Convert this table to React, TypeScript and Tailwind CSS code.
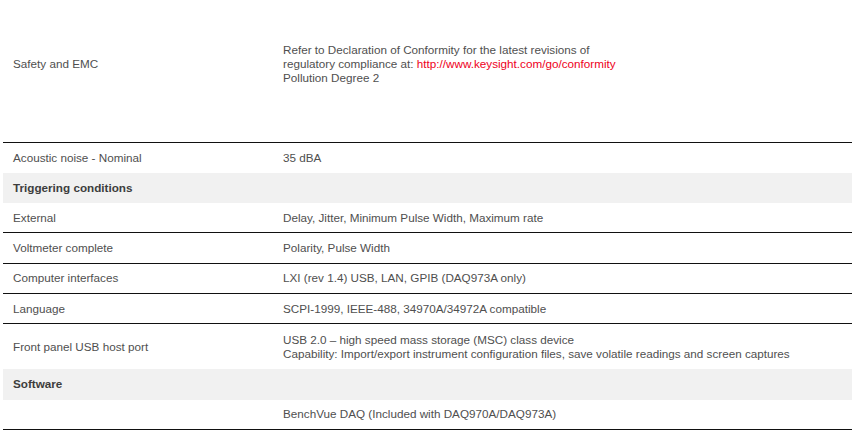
import React from "react";

type Row =
  | { kind: "head"; label: string; h: string }
  | { kind: "row"; label: string; value: React.ReactNode; h: string; border: boolean };

const rows: Row[] = [
  { kind: "row", label: "Acoustic noise - Nominal", value: "35 dBA", h: "h-[30.3px]", border: false },
  { kind: "head", label: "Triggering conditions", h: "h-[30.3px]" },
  { kind: "row", label: "External", value: "Delay, Jitter, Minimum Pulse Width, Maximum rate", h: "h-[30.3px]", border: true },
  { kind: "row", label: "Voltmeter complete", value: "Polarity, Pulse Width", h: "h-[30.3px]", border: true },
  { kind: "row", label: "Computer interfaces", value: "LXI (rev 1.4) USB, LAN, GPIB (DAQ973A only)", h: "h-[30.3px]", border: true },
  { kind: "row", label: "Language", value: "SCPI-1999, IEEE-488, 34970A/34972A compatible", h: "h-[30.3px]", border: true },
  {
    kind: "row",
    label: "Front panel USB host port",
    value: (
      <>
        USB 2.0 – high speed mass storage (MSC) class device
        <br />
        Capability: Import/export instrument configuration files, save volatile readings and screen captures
      </>
    ),
    h: "h-[45px]",
    border: false,
  },
  { kind: "head", label: "Software", h: "h-[30.3px]" },
  { kind: "row", label: "", value: "BenchVue DAQ (Included with DAQ970A/DAQ973A)", h: "h-[30.6px]", border: true },
];

export default function App() {
  return (
    <div
      className="w-[855px] h-[441px] overflow-hidden bg-white text-[#4f4f4f] text-[11.7px] leading-[14px]"
      style={{ fontFamily: '"Liberation Sans", Arial, sans-serif' }}
    >
      <div className="ml-[3px] w-[849px] -mt-[14px]">
        <div className="flex items-center h-[156.5px] border-b border-[#111]">
          <div className="w-[270px] pl-[10px]">Safety and EMC</div>
          <div className="flex-1 pl-[10px]">
            Refer to Declaration of Conformity for the latest revisions of
            <br />
            regulatory compliance at:{" "}
            <span className="text-[#ee0022]">http://www.keysight.com/go/conformity</span>
            <br />
            Pollution Degree 2
          </div>
        </div>
        {rows.map((r, i) =>
          r.kind === "head" ? (
            <div key={i} className={`flex items-center ${r.h} bg-[#f1f1f1]`}>
              <div className="pl-[10px] font-bold text-[#3d3d3d]">{r.label}</div>
            </div>
          ) : (
            <div
              key={i}
              className={`flex items-center ${r.h} ${r.border ? "border-b border-[#111]" : ""}`}
            >
              <div className="w-[270px] pl-[10px]">{r.label}</div>
              <div className="flex-1 pl-[10px]">{r.value}</div>
            </div>
          )
        )}
      </div>
    </div>
  );
}
